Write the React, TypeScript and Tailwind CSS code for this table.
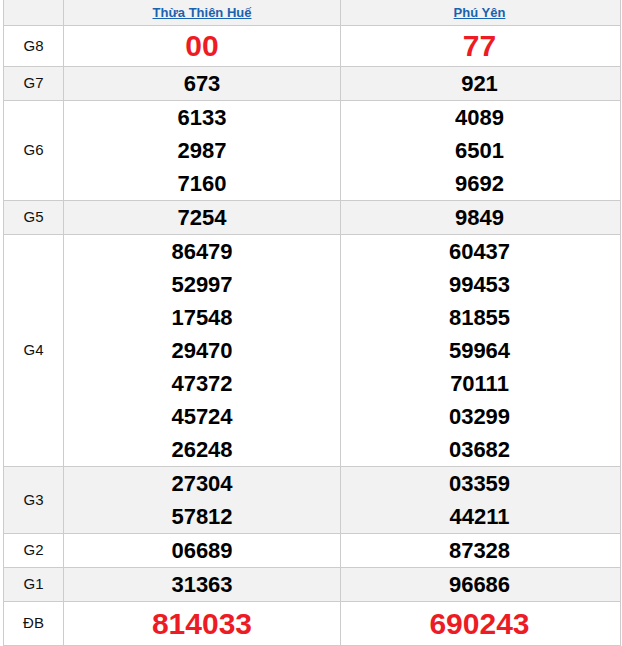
import React from "react";

type Row = { label: string; a: string[]; b: string[]; gray: boolean; kind?: "g8" | "db" };

const rows: Row[] = [
  { label: "G8", a: ["00"], b: ["77"], gray: false, kind: "g8" },
  { label: "G7", a: ["673"], b: ["921"], gray: true },
  { label: "G6", a: ["6133", "2987", "7160"], b: ["4089", "6501", "9692"], gray: false },
  { label: "G5", a: ["7254"], b: ["9849"], gray: true },
  {
    label: "G4",
    a: ["86479", "52997", "17548", "29470", "47372", "45724", "26248"],
    b: ["60437", "99453", "81855", "59964", "70111", "03299", "03682"],
    gray: false,
  },
  { label: "G3", a: ["27304", "57812"], b: ["03359", "44211"], gray: true },
  { label: "G2", a: ["06689"], b: ["87328"], gray: false },
  { label: "G1", a: ["31363"], b: ["96686"], gray: true },
  { label: "ĐB", a: ["814033"], b: ["690243"], gray: false, kind: "db" },
];

function Cell({ nums, kind, last }: { nums: string[]; kind?: "g8" | "db"; last?: boolean }) {
  const red = kind === "g8" || kind === "db";
  return (
    <div
      className={
        "w-[277px] flex flex-col items-center justify-center " + (last ? "" : "border-r border-[#cccccc]")
      }
    >
      {nums.map((n, i) =>
        red ? (
          <div key={i} className="text-[30px] leading-[40px] font-bold text-[#ed1c24]">
            {n}
          </div>
        ) : (
          <div key={i} className="text-[22px] leading-[33px] font-bold text-black">
            {n}
          </div>
        )
      )}
    </div>
  );
}

export default function App() {
  return (
    <div className="w-[622px] h-[646px] overflow-hidden bg-white" style={{ fontFamily: '"Liberation Sans", Arial, sans-serif' }}>
      <div className="ml-[3px] w-[618px] border-l border-r border-[#cccccc]">
        <div className="flex h-[26px] bg-[#f2f2f2] border-b border-[#cccccc]">
          <div className="w-[60px] border-r border-[#cccccc]" />
          <div className="w-[277px] border-r border-[#cccccc] flex items-center justify-center">
            <a href="#" className="text-[13px] font-bold text-[#1a62b0] underline">
              Thừa Thiên Huế
            </a>
          </div>
          <div className="w-[277px] flex items-center justify-center">
            <a href="#" className="text-[13px] font-bold text-[#1a62b0] underline">
              Phú Yên
            </a>
          </div>
        </div>
        {rows.map((r) => (
          <div
            key={r.label}
            className={
              "flex border-b border-[#cccccc] " +
              (r.gray ? "bg-[#f2f2f2] " : "bg-white ") +
              (r.kind === "db" ? "min-h-[44px]" : "")
            }
          >
            <div className="w-[60px] border-r border-[#cccccc] flex items-center justify-center text-[15px] text-[#111]">
              {r.label}
            </div>
            <Cell nums={r.a} kind={r.kind} />
            <Cell nums={r.b} kind={r.kind} last />
          </div>
        ))}
      </div>
    </div>
  );
}
